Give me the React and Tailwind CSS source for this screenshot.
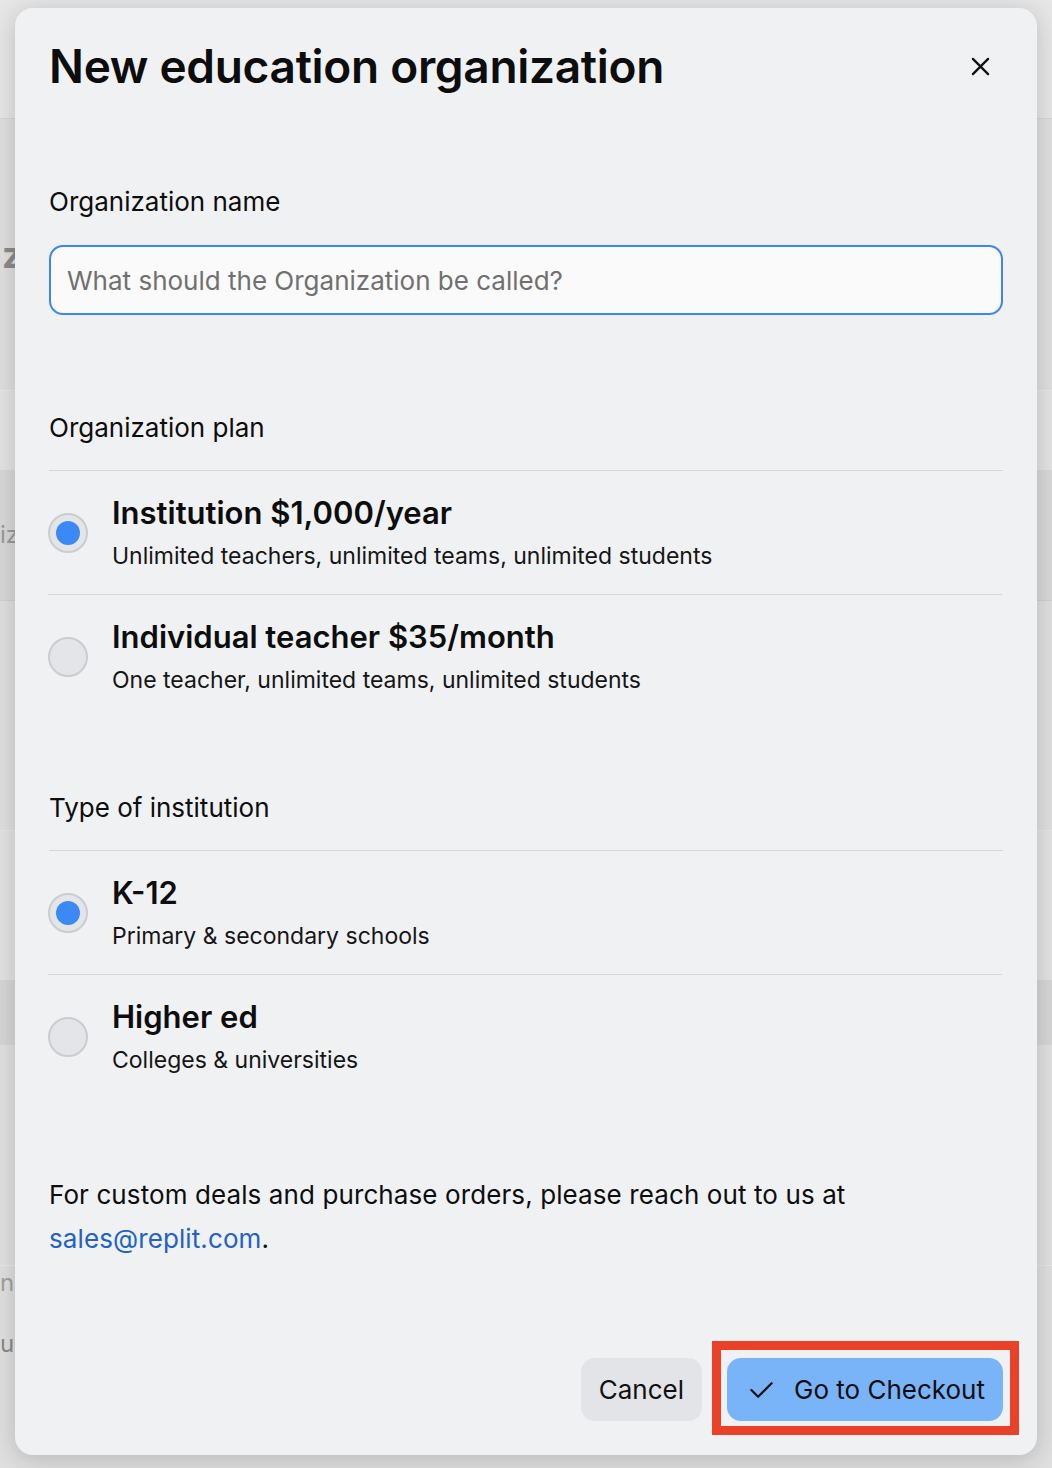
import { useState } from 'react';

const plans = [
  { id: 'institution', title: 'Institution $1,000/year', sub: 'Unlimited teachers, unlimited teams, unlimited students' },
  { id: 'teacher', title: 'Individual teacher $35/month', sub: 'One teacher, unlimited teams, unlimited students' },
];

const types = [
  { id: 'k12', title: 'K-12', sub: 'Primary & secondary schools' },
  { id: 'higher', title: 'Higher ed', sub: 'Colleges & universities' },
];

function Radio({ checked }) {
  return (
    <span className="flex h-[40px] w-[40px] shrink-0 items-center justify-center rounded-full border-2 border-[#cbcccf] bg-[#e4e5e8]">
      {checked ? <span className="h-[24px] w-[24px] rounded-full bg-[#3b89f5]" /> : null}
    </span>
  );
}

function OptionList({ items, value, onChange }) {
  return (
    <div className="border-t border-[#d5d6d9]">
      {items.map((item, i) => (
        <button
          key={item.id}
          onClick={() => onChange(item.id)}
          className={`-ml-px flex h-[124px] w-full items-center gap-[25px] text-left ${
            i < items.length - 1 ? 'border-b border-[#d5d6d9]' : ''
          }`}
        >
          <Radio checked={value === item.id} />
          <span className="block -ml-px">
            <span className="block text-[31px] font-semibold leading-[36px] text-[#0d0d0e]">{item.title}</span>
            <span className="mt-[10px] block text-[23px] leading-[30px] text-[#151516]">{item.sub}</span>
          </span>
        </button>
      ))}
    </div>
  );
}

function BackgroundPage() {
  return (
    <div className="h-[1468px] w-full bg-[#dfdfdf]">
      <div className="h-[118px] bg-[#e6e6e6]" />
      <div className="flex h-[272px] items-center border-t border-[#d6d6d6] pl-[2px] text-[36px] font-bold text-[#8a8a8a]">z</div>
      <div className="h-[80px] border-t border-[#e8e8e8] bg-[#e3e3e3]" />
      <div className="flex h-[130px] items-center bg-[#d8d8d8] text-[24px] text-[#9a9a9a]">iz</div>
      <div className="h-[230px] border-t border-[#d0d0d0]" />
      <div className="h-[150px] border-t border-[#e6e6e6] bg-[#e2e2e2]" />
      <div className="h-[65px] bg-[#d6d6d6]" />
      <div className="h-[220px] bg-[#e0e0e0] pt-[220px] text-[24px] text-[#a0a0a0]">n</div>
      <div className="h-[173px] border-t border-[#e8e8e8] pt-[60px] text-[24px] text-[#8a8a8a]">u</div>
    </div>
  );
}

export default function App() {
  const [plan, setPlan] = useState('institution');
  const [type, setType] = useState('k12');
  const [name, setName] = useState('');

  return (
    <div className="relative h-[1468px] w-[1052px] overflow-hidden font-['Inter','Noto_Sans',sans-serif] text-[#0d0d0e]">
      <BackgroundPage />

      {/* dialog */}
      <div className="absolute left-[15px] top-[8px] h-[1447px] w-[1022px] rounded-[18px] bg-[#f0f1f3] px-[34px] pt-[30px] shadow-[0_4px_24px_rgba(0,0,0,0.18)]">
        <div className="flex h-[56px] items-center justify-between">
          <h1 className="text-[46px] font-semibold tracking-[-0.3px] leading-[56px]">New education organization</h1>
          <button className="mr-[7px] flex h-[32px] w-[32px] items-center justify-center">
            <svg width="19" height="19" viewBox="0 0 20 20" fill="none" stroke="#111" strokeWidth="2.4" strokeLinecap="round">
              <path d="M2 2l16 16M18 2 2 18" />
            </svg>
          </button>
        </div>

        <label className="mt-[92px] block text-[26px] leading-[32px]">Organization name</label>
        <input
          value={name}
          onChange={(e) => setName(e.target.value)}
          placeholder="What should the Organization be called?"
          className="mt-[27px] block h-[70px] w-full rounded-[14px] border-2 border-[#3b86f0] bg-[#fafafa] px-[16px] text-[26px] text-[#111] outline-none placeholder:text-[#707070]"
        />

        <h2 className="mt-[97px] text-[26px] leading-[32px]">Organization plan</h2>
        <div className="mt-[26px]">
          <OptionList items={plans} value={plan} onChange={setPlan} />
        </div>

        <h2 className="mt-[73px] text-[26px] leading-[32px]">Type of institution</h2>
        <div className="mt-[26px]">
          <OptionList items={types} value={type} onChange={setType} />
        </div>

        <p className="mt-[74px] text-[26px] tracking-[0.1px] leading-[44px]">
          For custom deals and purchase orders, please reach out to us at{' '}
          <br />
          <a href="#" className="text-[#2262c4]">sales@replit.com</a>.
        </p>

        <div className="mt-[97px] flex justify-end gap-[25px]">
          <button className="h-[63px] rounded-[14px] bg-[#e3e4e7] px-[18px] text-[26px] text-[#111]">Cancel</button>
          <div className="relative">
            <button className="flex h-[63px] items-center gap-[19px] rounded-[14px] bg-[#7ab4f8] pl-[21px] pr-[18px] text-[26px] text-[#0d0d0e]">
              <svg width="27" height="27" viewBox="0 0 24 24" fill="none" stroke="#111" strokeWidth="2" strokeLinecap="round" strokeLinejoin="round">
                <path d="M3 12.5l6 6L21 6.5" />
              </svg>
              Go to Checkout
            </button>
            <div className="pointer-events-none absolute -bottom-[14px] -left-[15px] -right-[16px] -top-[17px] border-[9px] border-[#ea4128]" />
          </div>
        </div>
      </div>
    </div>
  );
}
